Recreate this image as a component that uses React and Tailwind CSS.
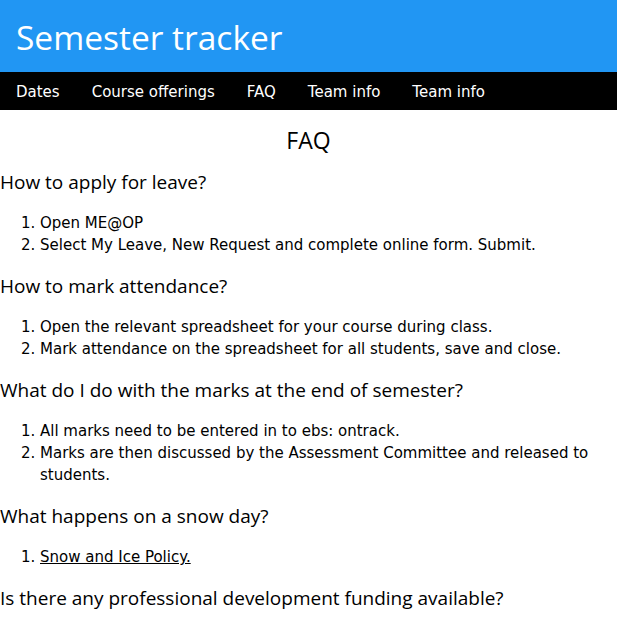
export default function App() {
  const head = { fontFamily: '"Open Sans", "Noto Sans", Arial, sans-serif' };
  const faqs = [
    { q: "How to apply for leave?", a: ["Open ME@OP", "Select My Leave, New Request and complete online form. Submit."] },
    { q: "How to mark attendance?", a: ["Open the relevant spreadsheet for your course during class.", "Mark attendance on the spreadsheet for all students, save and close."] },
    { q: "What do I do with the marks at the end of semester?", a: ["All marks need to be entered in to ebs: ontrack.", "Marks are then discussed by the Assessment Committee and released to students."] },
    { q: "What happens on a snow day?", a: [<a key="l" href="#" className="underline">Snow and Ice Policy.</a>] },
    { q: "Is there any professional development funding available?", a: [] },
  ];
  return (
    <div className="w-[617px] h-[625px] overflow-hidden bg-white text-black" style={{ fontFamily: '"DejaVu Sans", Verdana, sans-serif' }}>
      <header className="bg-[#2196f3] h-[72px] flex items-center px-4 pt-[4px]">
        <h1 className="text-[33.5px] text-white leading-none" style={head}>Semester tracker</h1>
      </header>
      <nav className="bg-black h-[38px] flex items-center text-white text-[15px] pt-[2px]">
        {["Dates", "Course offerings", "FAQ", "Team info", "Team info"].map((t, i) => (
          <span key={i} className="px-4">{t}</span>
        ))}
      </nav>
      <h2 className="text-center text-[23px] mt-[16px] leading-[28px]" style={head}>FAQ</h2>
      {faqs.map((f, i) => (
        <div key={i}>
          <h3 className={`text-[19px] leading-[28px] ${i === 0 ? "mt-[14px]" : "mt-[16px]"}`} style={head}>{f.q}</h3>
          {f.a.length > 0 && (
            <ol className="list-decimal pl-[40px] mt-[16px] text-[15px] leading-[22px]">
              {f.a.map((x, j) => <li key={j}>{x}</li>)}
            </ol>
          )}
        </div>
      ))}
    </div>
  );
}
